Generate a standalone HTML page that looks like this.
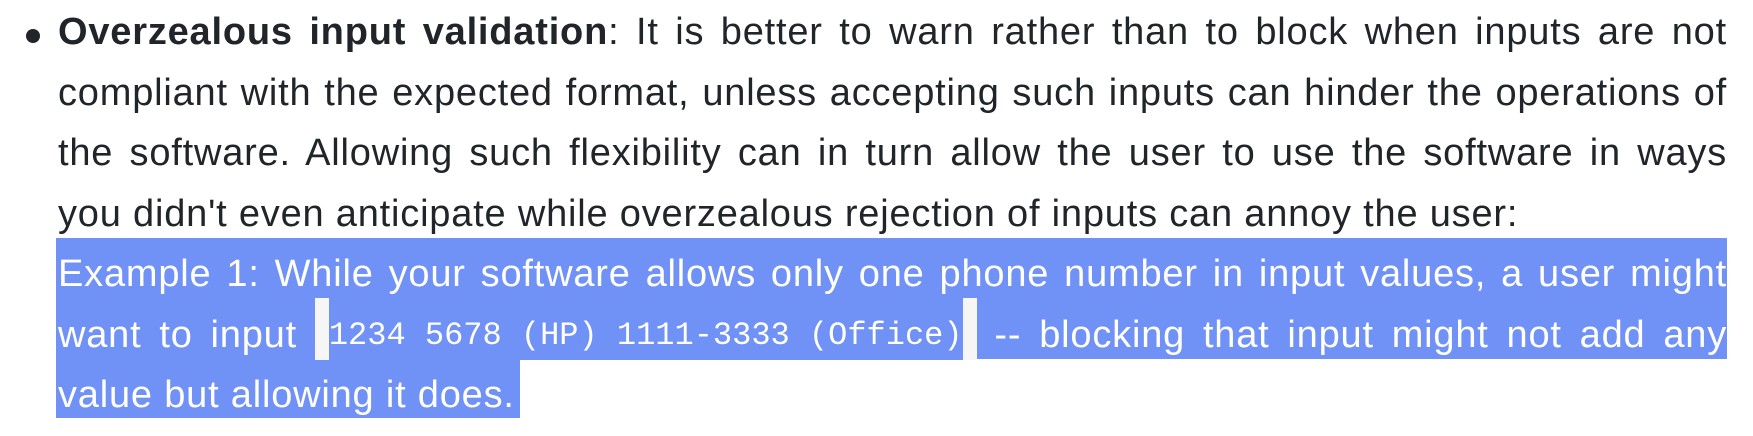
<!DOCTYPE html>
<html><head><meta charset="utf-8"><style>
html,body{margin:0;padding:0;background:#fff;width:1753px;height:436px;overflow:hidden}
.wrap{position:absolute;left:58px;top:-4px;width:1669px}
.l{font-family:"Liberation Sans",sans-serif;font-size:38px;letter-spacing:0.8px;height:60.5px;line-height:60.5px;color:#212529;text-align:justify;text-align-last:justify;white-space:nowrap;}
.dot{position:absolute;left:-32px;top:33px;width:14px;height:14px;border-radius:50%;background:#212529}
b{font-weight:bold}
.hl{position:absolute;left:-2px;width:1671px;top:242px;height:121px;background:#7091f5}
.hl2{position:absolute;left:-2px;width:464px;top:363px;height:59px;background:#7091f5}
code{font-family:"Liberation Mono",monospace;font-size:32px;letter-spacing:0;background:#f6f6f6;padding:0 14px;display:inline-block;height:62px;vertical-align:top;margin-top:-7px;position:relative}
code span{background:#7091f5;color:#fff;display:inline-block;height:55px;padding-top:7px;line-height:62px;vertical-align:top}
.wh{color:#fff}
</style></head><body>
<div class="wrap">
<div class="dot"></div>
<div class="hl"></div><div class="hl2"></div>
<div style="position:relative;top:6px">
<div class="l"><b>Overzealous input validation</b>: It is better to warn rather than to block when inputs are not</div>
<div class="l">compliant with the expected format, unless accepting such inputs can hinder the operations of</div>
<div class="l">the software. Allowing such flexibility can in turn allow the user to use the software in ways</div>
<div class="l" style="text-align-last:left">you didn't even anticipate while overzealous rejection of inputs can annoy the user:</div>
<div class="l wh">Example 1: While your software allows only one phone number in input values, a user might</div>
<div class="l wh">want to input <code><span>1234 5678 (HP) 1111-3333 (Office)</span></code> -- blocking that input might not add any</div>
<div class="l wh" style="text-align-last:left">value but allowing it does.</div>
</div>
</div>
</body></html>
